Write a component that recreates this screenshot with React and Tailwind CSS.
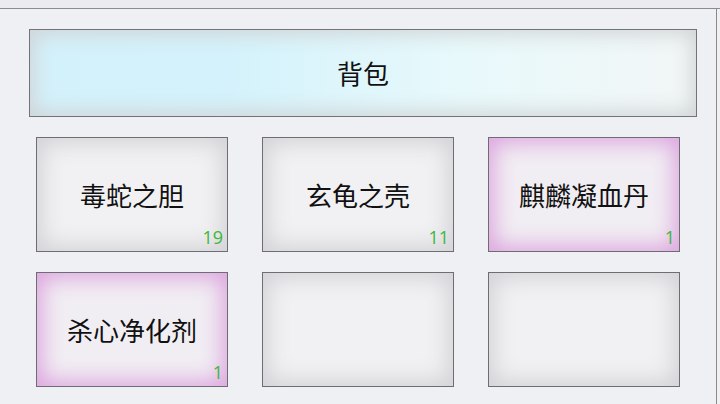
import React from "react";

const items = [
  { name: "毒蛇之胆", count: "19", kind: "gray" },
  { name: "玄龟之壳", count: "11", kind: "gray" },
  { name: "麒麟凝血丹", count: "1", kind: "purple" },
  { name: "杀心净化剂", count: "1", kind: "purple" },
  { name: "", count: "", kind: "gray" },
  { name: "", count: "", kind: "gray" },
];

function Card({ item }) {
  const bg =
    item.kind === "purple"
      ? "bg-[#f1eef3] shadow-[inset_0_0_22px_5px_#dca4de]"
      : "bg-[#f1f1f3] shadow-[inset_0_0_22px_5px_#d2d2d6]";
  return (
    <div className={`relative flex items-center justify-center border border-[#6e6e72] ${bg}`}>
      <span className="text-[26px] leading-none text-[#111]">{item.name}</span>
      {item.count && (
        <span
          className="absolute right-[4px] bottom-[5px] text-[18px] leading-none text-[#3cb83e]"
          style={{ fontFamily: '"Open Sans", "Noto Sans", sans-serif' }}
        >
          {item.count}
        </span>
      )}
    </div>
  );
}

export default function App() {
  return (
    <div
      className="flex h-[404px] w-[720px] flex-col overflow-hidden bg-[#eff0f3]"
      style={{ fontFamily: '"Noto Sans CJK SC", "Noto Sans", sans-serif' }}
    >
      <div className="h-[9px] shrink-0 border-b border-[#8c8c90] bg-[#ececf0]" />
      <div className="flex flex-1">
        <div className="flex w-[717px] flex-col border-r border-[#8a8a8e] pt-[20px]">
          <div className="ml-[29px] flex h-[88px] w-[668px] items-center justify-center border border-[#737377] bg-[linear-gradient(90deg,#d3f1fb_0%,#d4f2fb_30%,#e8f9fb_65%,#f2f6f6_100%)] shadow-[inset_0_0_20px_4px_#d0d4d6]">
            <span className="text-[26px] leading-none text-[#111]">背包</span>
          </div>
          <div className="ml-[36px] mt-[20px] grid grid-cols-[192px_192px_192px] grid-rows-[115px_115px] gap-x-[34px] gap-y-[20px]">
            {items.map((it, i) => (
              <Card key={i} item={it} />
            ))}
          </div>
        </div>
        <div className="flex-1 bg-[#f0f0f2]" />
      </div>
    </div>
  );
}
